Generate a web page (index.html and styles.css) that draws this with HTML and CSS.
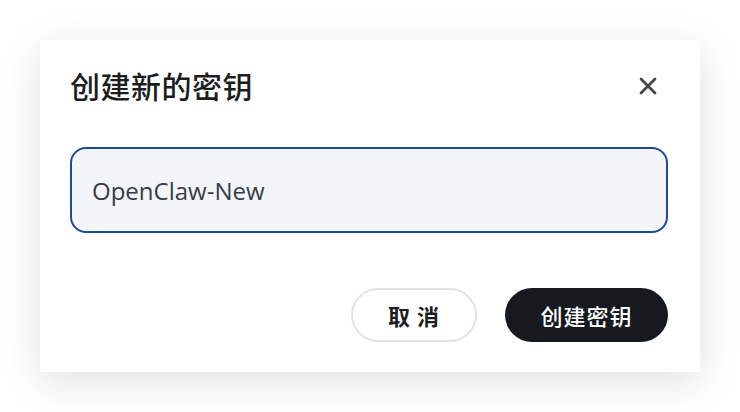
FILE: index.html
```html
<!DOCTYPE html>
<html lang="zh-CN">
<head>
<meta charset="utf-8">
<title>创建新的密钥</title>
<link rel="stylesheet" href="styles.css">
</head>
<body>
<div class="dialog">
  <div class="dialog-header">
    <h2 class="dialog-title">创建新的密钥</h2>
    <button class="close-btn" aria-label="关闭">
      <svg width="20" height="20" viewBox="0 0 20 20"><path d="M3 3 L17 17 M17 3 L3 17" stroke="#474747" stroke-width="2.8" stroke-linecap="round" fill="none"/></svg>
    </button>
  </div>
  <div class="field">
    <input class="key-input" type="text" value="OpenClaw-New">
  </div>
  <div class="dialog-footer">
    <button class="btn btn-cancel">取 消</button>
    <button class="btn btn-primary">创建密钥</button>
  </div>
</div>
</body>
</html>
```

FILE: styles.css
```css
html, body {
  margin: 0;
  padding: 0;
  background: #ffffff;
}
body {
  padding: 40px;
  font-family: "Noto Sans CJK SC", "Noto Sans", sans-serif;
}
.dialog {
  width: 660px;
  height: 332px;
  box-sizing: border-box;
  background: #ffffff;
  padding: 30px 32px 30px 30px;
  box-shadow: 0 10px 40px rgba(0, 0, 0, 0.12);
  display: flex;
  flex-direction: column;
}
.dialog-header {
  display: flex;
  align-items: center;
  justify-content: space-between;
  height: 30px;
}
.dialog-title {
  margin: 0;
  font-size: 30px;
  font-weight: 500;
  color: #1b1d21;
  line-height: 30px;
  letter-spacing: 0.5px;
}
.close-btn {
  border: none;
  background: none;
  padding: 0;
  width: 20px;
  height: 20px;
  margin-right: 10px;
  margin-top: 2px;
  cursor: pointer;
  display: flex;
}
.field {
  margin-top: 47px;
}
.key-input {
  box-sizing: border-box;
  width: 598px;
  height: 86px;
  border: 2px solid #1f4a94;
  border-radius: 16px;
  background: #f3f5f9;
  padding: 0 20px;
  font-family: "Open Sans", "Noto Sans", sans-serif;
  font-size: 24px;
  color: #363d48;
  outline: none;
}
.dialog-footer {
  margin-top: auto;
  display: flex;
  justify-content: flex-end;
  gap: 28px;
}
.btn {
  height: 54px;
  border-radius: 27px;
  font-family: "Noto Sans CJK SC", "Noto Sans", sans-serif;
  font-size: 22px;
  cursor: pointer;
  padding: 0;
}
.btn-cancel {
  width: 126px;
  background: #ffffff;
  border: 2px solid #e1e3e7;
  color: #1b1d21;
  font-weight: 700;
  letter-spacing: 1px;
}
.btn-primary {
  width: 163px;
  background: #16191e;
  border: none;
  color: #ffffff;
  font-weight: 500;
  letter-spacing: 1px;
}
```
